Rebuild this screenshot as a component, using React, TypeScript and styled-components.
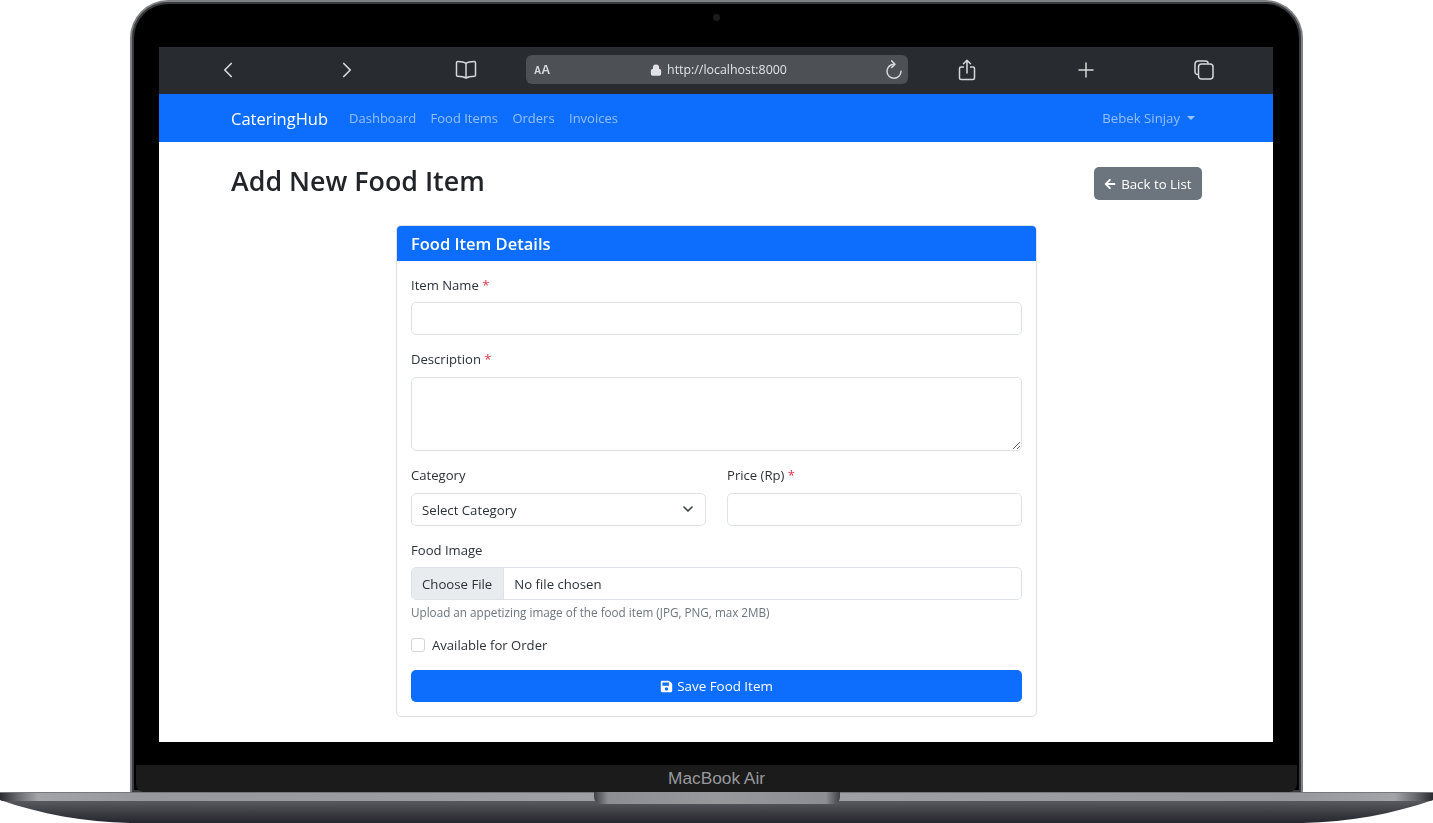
import styled, { createGlobalStyle } from 'styled-components'
import { ChevronLeft, ChevronRight, Plus, Lock, ChevronDown } from 'lucide-react'
import { FaArrowLeft, FaSave } from 'react-icons/fa'

const GlobalStyle = createGlobalStyle`
  html, body {
    margin: 0;
    background: #fff;
    overflow: hidden;
  }
  * {
    box-sizing: border-box;
  }
`

const Page = styled.div`
  width: 1433px;
  height: 823px;
  display: flex;
  flex-direction: column;
  align-items: center;
  font-family: "Open Sans", "Noto Sans", sans-serif;
  color: #2c3136;
`

const Lid = styled.div`
  width: 1173px;
  height: 792px;
  display: flex;
  flex-direction: column;
  background: #000;
  border: 2px solid #808185;
  border-bottom: 0;
  border-radius: 38px 38px 0 0;
  box-shadow: inset 0 0 0 2px #3a3b3e;
`

const TopBezel = styled.div`
  height: 45px;
  display: flex;
  align-items: center;
  justify-content: center;
  padding-bottom: 14px;
`

const Camera = styled.span`
  width: 7px;
  height: 7px;
  border-radius: 50%;
  background: #1b1c1e;
`

// the reference is a scaled down capture, so the whole screen is a little soft
const Screen = styled.div`
  width: 1114px;
  height: 695px;
  margin-left: 27px;
  display: flex;
  flex-direction: column;
  background: #fff;
  overflow: hidden;
  filter: blur(0.4px);
`

const BlackChin = styled.div`
  height: 23px;
`

const KeyStrip = styled.div`
  height: 27px;
  margin: 0 4px;
  display: flex;
  align-items: center;
  justify-content: center;
  background: #1b1b1c;
  border-radius: 0 0 8px 8px;
  font-family: "Liberation Sans", Arial, sans-serif;
  font-size: 17.3px;
  color: #98999c;
`

const Base = styled.div`
  position: relative;
  width: 1433px;
  height: 31px;
  background: linear-gradient(#5b5c61 0, #55565b 35%, #3d3e44 65%, #25272e 100%);
  clip-path: path("M0 0H1433V8C1393 22 1348 30 1303 31H130C85 30 40 22 0 8Z");
`

const BaseEdge = styled.div`
  height: 9px;
  border-top: 1px solid #77787c;
  background: linear-gradient(
    90deg,
    #2a2b30 0,
    #6a6b70 18px,
    #a3a4a8 38px,
    #97989d 140px,
    #a0a1a6 50%,
    #97989d calc(100% - 140px),
    #a3a4a8 calc(100% - 38px),
    #6a6b70 calc(100% - 18px),
    #2a2b30 100%
  );
`

const Notch = styled.div`
  position: absolute;
  top: 0;
  left: 594px;
  width: 246px;
  height: 12px;
  border-radius: 0 0 7px 7px;
  background: linear-gradient(
    90deg,
    #3f4045 0,
    #8d8e93 14px,
    #97989c 50%,
    #8d8e93 calc(100% - 14px),
    #3f4045 100%
  );
`

const BrowserBar = styled.div`
  height: 47px;
  flex-shrink: 0;
  display: grid;
  grid-template-columns: 118.5px 118.5px 120px 382px 118.5px 118.5px 118.5px;
  align-items: center;
  padding: 0 0 2px 10px;
  background: #282c30;
  color: #d6d7d9;
`

const BarIcon = styled.div`
  display: flex;
  justify-content: center;
  align-items: center;
`

const AddressBar = styled.div`
  height: 29px;
  display: grid;
  grid-template-columns: 1fr auto 1fr;
  align-items: center;
  padding: 0 5px 0 8px;
  border-radius: 6px;
  background: #4d5055;
`

const TextSize = styled.span`
  font-family: "Liberation Sans", Arial, sans-serif;
  font-weight: 700;
  color: #d6d7d9;
  font-size: 12.5px;
  & small {
    font-size: 10px;
  }
`

const Url = styled.div`
  display: flex;
  align-items: center;
  gap: 5px;
  font-size: 12.4px;
  color: #e2e3e5;
`

const Reload = styled.div`
  display: flex;
  justify-content: flex-end;
`

const Navbar = styled.nav`
  height: 48px;
  flex-shrink: 0;
  display: flex;
  align-items: center;
  padding: 0 78px 0 72px;
  background: #0d6efd;
`

const Brand = styled.span`
  margin-right: 21px;
  font-size: 16.5px;
  color: #fff;
`

const NavLinks = styled.div`
  display: flex;
  gap: 14.4px;
  flex: 1;
`

const NavLink = styled.span`
  font-size: 13px;
  color: rgba(255, 255, 255, 0.55);
`

const UserMenu = styled(NavLink)`
  display: flex;
  align-items: center;
  gap: 7px;
  font-size: 13.2px;
  &::after {
    content: "";
    border-top: 4px solid rgba(255, 255, 255, 0.6);
    border-left: 4px solid transparent;
    border-right: 4px solid transparent;
  }
`

const Main = styled.main`
  padding: 25px 71px 0 72px;
`

const TitleRow = styled.div`
  display: flex;
  justify-content: space-between;
  align-items: flex-start;
  margin-bottom: 25px;
`

const Title = styled.h1`
  margin: 0;
  font-size: 26.8px;
  line-height: 28px;
  font-weight: 600;
  color: #212529;
`

const BackButton = styled.button`
  height: 33px;
  display: flex;
  align-items: center;
  gap: 5px;
  padding: 0 10.5px;
  border: 0;
  border-radius: 5px;
  background: #6c757d;
  color: #fff;
  font-family: inherit;
  font-size: 13.3px;
`

const Card = styled.section`
  width: 641px;
  margin-left: 165px;
  border: 1px solid #dfe1e4;
  border-radius: 5px;
  overflow: hidden;
`

const CardHeader = styled.h2`
  height: 36px;
  margin: -1px -1px 0;
  display: flex;
  align-items: center;
  padding: 0 15px;
  background: #0d6efd;
  color: #fff;
  font-size: 16.5px;
  font-weight: 600;
`

const CardBody = styled.div`
  padding: 14px;
`

const Field = styled.div`
  margin-bottom: 14px;
`

const Label = styled.label`
  display: block;
  height: 20px;
  margin-bottom: 7px;
  font-size: 13.1px;
  line-height: 20px;
`

const Required = styled.span`
  color: #dc3545;
`

const inputStyles = `
  display: block;
  width: 100%;
  border: 1px solid #dee2e6;
  border-radius: 5px;
  background: #fff;
  font-family: inherit;
  font-size: 13.2px;
  color: #2c3136;
  outline: none;
`

const TextInput = styled.input`
  ${inputStyles}
  height: 33px;
`

const TextArea = styled.textarea`
  ${inputStyles}
  height: 74px;
  margin-top: 8px;
  resize: vertical;
`

const FieldGrid = styled.div`
  display: grid;
  grid-template-columns: 1fr 1fr;
  gap: 21px;
  & ${Label} {
    margin-bottom: 8px;
  }
`

const SelectWrap = styled.div`
  position: relative;
`

const Select = styled.select`
  ${inputStyles}
  height: 33px;
  padding: 0 36px 0 10px;
  appearance: none;
`

const SelectArrow = styled(ChevronDown)`
  position: absolute;
  top: 8px;
  right: 10px;
  color: #343a40;
  pointer-events: none;
`

const FileInput = styled(TextInput)`
  overflow: hidden;
  &::file-selector-button {
    height: 33px;
    margin: -1px 10px 0 -1px;
    padding: 0 11px;
    border: 0;
    border-right: 1px solid #dee2e6;
    background: #e9ecef;
    font-family: inherit;
    font-size: 13.2px;
    color: #2c3136;
  }
`

const Hint = styled.div`
  height: 18px;
  margin-top: 3px;
  font-size: 11.7px;
  line-height: 18px;
  color: #6c757d;
`

const CheckRow = styled.label`
  height: 20px;
  display: flex;
  align-items: center;
  gap: 7px;
  margin-bottom: 15px;
  font-size: 13.1px;
`

const CheckBox = styled.input`
  width: 14px;
  height: 14px;
  margin: 0;
  appearance: none;
  border: 1px solid #d3d6da;
  border-radius: 3px;
  background: #fff;
`

const SaveButton = styled.button`
  width: 100%;
  height: 32px;
  display: flex;
  align-items: center;
  justify-content: center;
  gap: 4px;
  border: 0;
  border-radius: 5px;
  background: #0d6efd;
  color: #fff;
  font-family: inherit;
  font-size: 13.4px;
`

const BookIcon = () => (
  <svg width="22" height="19" viewBox="0 0 22 19" fill="none" stroke="currentColor" strokeWidth="1.5" strokeLinejoin="round">
    <path d="M11 3.4C9.4 2 7 1.4 2.8 1.4 2 1.4 1.5 1.9 1.5 2.7v12.6c0 .6.4 1 1 1 3.6 0 6.2.3 8.5 1.7 2.3-1.4 4.9-1.7 8.5-1.7.6 0 1-.4 1-1V2.7c0-.8-.5-1.3-1.3-1.3C15 1.4 12.6 2 11 3.4z" />
    <path d="M11 3.4V18" />
  </svg>
)

const ShareIcon = () => (
  <svg width="18" height="22" viewBox="0 0 18 22" fill="none" stroke="currentColor" strokeWidth="1.5" strokeLinecap="round" strokeLinejoin="round">
    <path d="M5.5 8H3a1.5 1.5 0 0 0-1.5 1.5v9.500A1.500 1.500 0 0 0 3 20.500h12a1.500 1.500 0 0 0 1.500-1.500V9.500A1.500 1.500 0 0 0 15 8h-2.500" />
    <path d="M9 14V1.500M5.500 4.800 9 1.300l3.500 3.500" />
  </svg>
)

const TabsIcon = () => (
  <svg width="20" height="20" viewBox="0 0 20 20" fill="none" stroke="currentColor" strokeWidth="1.5" strokeLinejoin="round">
    <path d="M4.200 14.500A2.700 2.700 0 0 1 1 12V4a3 3 0 0 1 3-3h7.500a2.800 2.800 0 0 1 2.700 2.500" />
    <rect x="4.500" y="4" width="14.500" height="15" rx="3" />
  </svg>
)

const ReloadIcon = () => (
  <svg width="18" height="20" viewBox="0 0 18 20" fill="none" stroke="currentColor" strokeWidth="1.5" strokeLinecap="round" strokeLinejoin="round">
    <path d="M9 4.300a7 7 0 1 0 7 7" />
    <path d="M6.800.900 10 4.200 6.800 7.400" />
  </svg>
)

export default function App() {
  return (
    <Page>
      <GlobalStyle />
      <Lid>
        <TopBezel>
          <Camera />
        </TopBezel>
        <Screen>
          <BrowserBar>
            <BarIcon><ChevronLeft size={26} strokeWidth={1.6} /></BarIcon>
            <BarIcon><ChevronRight size={26} strokeWidth={1.6} /></BarIcon>
            <BarIcon><BookIcon /></BarIcon>
            <AddressBar>
              <TextSize><small>A</small>A</TextSize>
              <Url>
                <Lock size={12} strokeWidth={2.5} fill="currentColor" />
                http://localhost:8000
              </Url>
              <Reload><ReloadIcon /></Reload>
            </AddressBar>
            <BarIcon><ShareIcon /></BarIcon>
            <BarIcon><Plus size={24} strokeWidth={1.5} /></BarIcon>
            <BarIcon><TabsIcon /></BarIcon>
          </BrowserBar>
          <Navbar>
            <Brand>CateringHub</Brand>
            <NavLinks>
              <NavLink>Dashboard</NavLink>
              <NavLink>Food Items</NavLink>
              <NavLink>Orders</NavLink>
              <NavLink>Invoices</NavLink>
            </NavLinks>
            <UserMenu>Bebek Sinjay</UserMenu>
          </Navbar>
          <Main>
            <TitleRow>
              <Title>Add New Food Item</Title>
              <BackButton><FaArrowLeft size={12} /> Back to List</BackButton>
            </TitleRow>
            <Card>
              <CardHeader>Food Item Details</CardHeader>
              <CardBody>
                <Field>
                  <Label>Item Name <Required>*</Required></Label>
                  <TextInput type="text" />
                </Field>
                <Field>
                  <Label>Description <Required>*</Required></Label>
                  <TextArea />
                </Field>
                <FieldGrid>
                  <Field>
                    <Label>Category</Label>
                    <SelectWrap>
                      <Select defaultValue="">
                        <option value="">Select Category</option>
                      </Select>
                      <SelectArrow size={16} strokeWidth={2.4} />
                    </SelectWrap>
                  </Field>
                  <Field>
                    <Label>Price (Rp) <Required>*</Required></Label>
                    <TextInput type="text" />
                  </Field>
                </FieldGrid>
                <Field>
                  <Label>Food Image</Label>
                  <FileInput type="file" />
                  <Hint>Upload an appetizing image of the food item (JPG, PNG, max 2MB)</Hint>
                </Field>
                <CheckRow>
                  <CheckBox type="checkbox" />
                  Available for Order
                </CheckRow>
                <SaveButton><FaSave size={13} /> Save Food Item</SaveButton>
              </CardBody>
            </Card>
          </Main>
        </Screen>
        <BlackChin />
        <KeyStrip>MacBook Air</KeyStrip>
      </Lid>
      <Base>
        <BaseEdge />
        <Notch />
      </Base>
    </Page>
  )
}
